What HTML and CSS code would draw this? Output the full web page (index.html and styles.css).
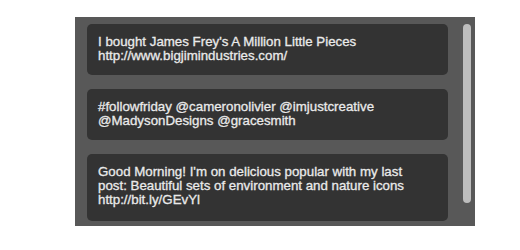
FILE: index.html
```html
<!DOCTYPE html>
<html lang="en">
<head>
  <meta charset="UTF-8">
  <title>Tweets</title>
  <link rel="stylesheet" href="styles.css">
</head>
<body>
  <section class="panel">
    <div class="tweet-list">
      <div class="tweet">I bought James Frey's A Million Little Pieces<br>http://www.bigjimindustries.com/</div>
      <div class="tweet">#followfriday @cameronolivier @imjustcreative<br>@MadysonDesigns @gracesmith</div>
      <div class="tweet">Good Morning! I'm on delicious popular with my last<br>post: Beautiful sets of environment and nature icons<br>http://bit.ly/GEvYl</div>
    </div>
    <div class="scrollbar"><div class="thumb"></div></div>
  </section>
</body>
</html>
```

FILE: styles.css
```css
body {
  background-color: #fff;
  font-family: "Liberation Sans", Arial, sans-serif;
  margin: 0;
  padding: 17px 0 0 75px;
}
.panel {
  width: 400px;
  height: 209px;
  box-sizing: border-box;
  background-color: #585858;
  padding: 7px 4px 0 12px;
  display: flex;
  overflow: hidden;
}
.tweet-list {
  width: 361px;
  display: flex;
  flex-direction: column;
  gap: 14px;
}
.tweet {
  background-color: #333;
  color: #eaeaea;
  font-size: 13.3px;
  line-height: 14px;
  padding: 11px 11px 12px 11px;
  border-radius: 5px;
  -webkit-text-stroke: 0.3px #eaeaea;
}
.tweet:last-child {
  padding-bottom: 14px;
}
.scrollbar {
  width: 8px;
  margin-left: 15px;
}
.thumb {
  height: 179px;
  background-color: #bdbdbd;
  border-radius: 4px;
}
```
